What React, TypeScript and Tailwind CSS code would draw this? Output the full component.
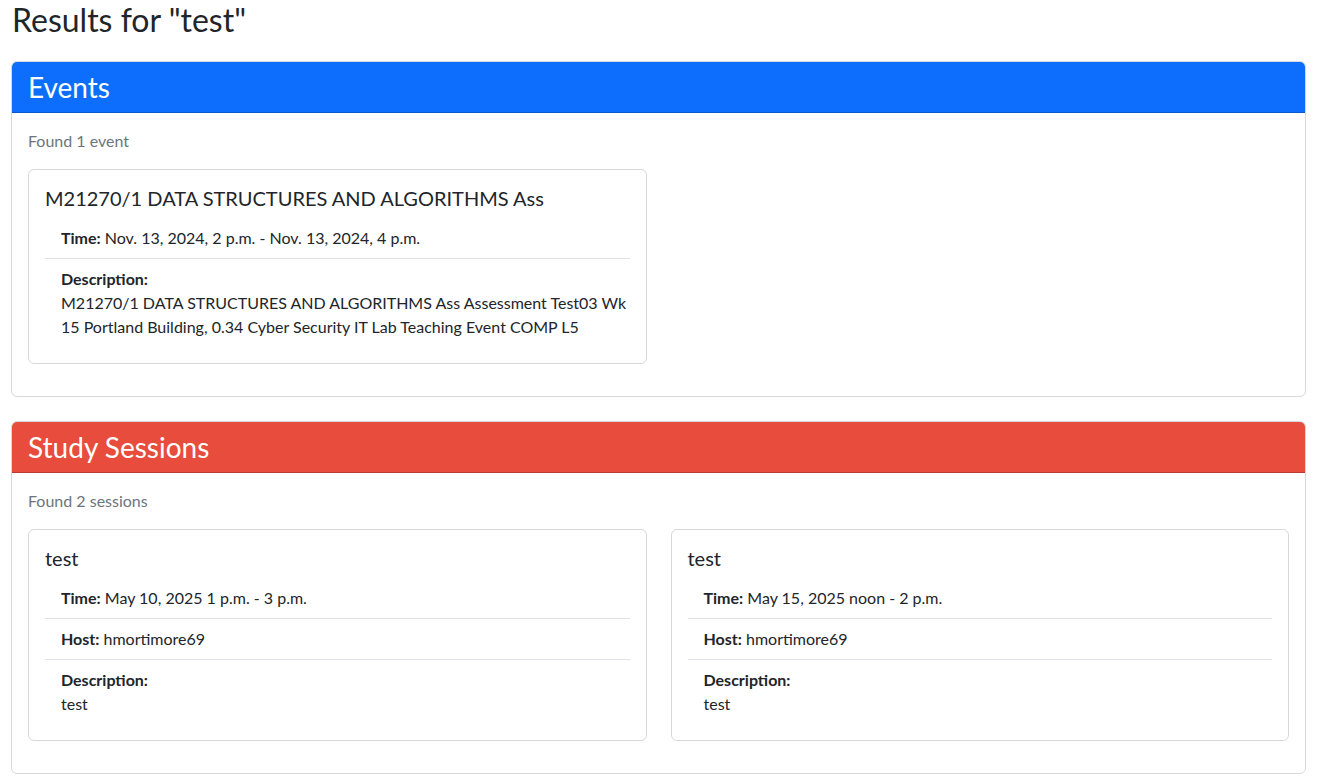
import React from "react";

const font = { fontFamily: '"Segoe UI", Lato, sans-serif' };

function Row({ label, children, last }: { label: string; children?: React.ReactNode; last?: boolean }) {
  return (
    <div className={`px-4 py-2 ${last ? "" : "border-b border-[#dee2e6]"}`}>
      <span className="font-bold">{label}</span> {children}
    </div>
  );
}

function DescRow({ text }: { text: React.ReactNode }) {
  return (
    <div className="px-4 py-2">
      <div className="font-bold">Description:</div>
      <div>{text}</div>
    </div>
  );
}

function InnerCard({ title, children }: { title: string; children: React.ReactNode }) {
  return (
    <div className="mb-4 rounded-[6px] border border-[#d6d8db] bg-white p-4">
      <h5 className="mb-2 text-[20px] leading-[1.2] font-normal">{title}</h5>
      <div className="text-[16px] leading-6">{children}</div>
    </div>
  );
}

function Section({ title, color, found, children }: { title: string; color: string; found: string; children: React.ReactNode }) {
  return (
    <div className="mb-6 overflow-hidden rounded-[6px] border border-[#d6d8db]">
      <div className={`${color} border-b border-black/20 px-4 pt-[9px] pb-[7px]`}>
        <h3 className="text-[28px] leading-[1.2] font-normal text-white">{title}</h3>
      </div>
      <div className="p-4">
        <p className="mb-4 text-[16px] leading-6 text-[#6c757d]">{found}</p>
        {children}
      </div>
    </div>
  );
}

export default function App() {
  return (
    <div className="min-h-screen bg-white pl-[11px] pr-[20px] text-[#212529]" style={font}>
      <h2 className="pt-[1px] pb-[22px] pl-[1px] text-[32px] leading-[1.2] font-normal">Results for "test"</h2>
      <Section title="Events" color="bg-[#0d6efd]" found="Found 1 event">
        <div className="grid grid-cols-2 gap-x-6">
          <InnerCard title="M21270/1 DATA STRUCTURES AND ALGORITHMS Ass">
            <Row label="Time:">Nov. 13, 2024, 2 p.m. - Nov. 13, 2024, 4 p.m.</Row>
            <DescRow
              text={
                <>
                  <span className="whitespace-nowrap">M21270/1 DATA STRUCTURES AND ALGORITHMS Ass Assessment Test03 Wk</span>
                  <br />
                  <span className="whitespace-nowrap">15 Portland Building, 0.34 Cyber Security IT Lab Teaching Event COMP L5</span>
                </>
              }
            />
          </InnerCard>
        </div>
      </Section>
      <Section title="Study Sessions" color="bg-[#e74c3c]" found="Found 2 sessions">
        <div className="grid grid-cols-2 gap-x-6">
          <InnerCard title="test">
            <Row label="Time:">May 10, 2025 1 p.m. - 3 p.m.</Row>
            <Row label="Host:">hmortimore69</Row>
            <DescRow text="test" />
          </InnerCard>
          <InnerCard title="test">
            <Row label="Time:">May 15, 2025 noon - 2 p.m.</Row>
            <Row label="Host:">hmortimore69</Row>
            <DescRow text="test" />
          </InnerCard>
        </div>
      </Section>
    </div>
  );
}
